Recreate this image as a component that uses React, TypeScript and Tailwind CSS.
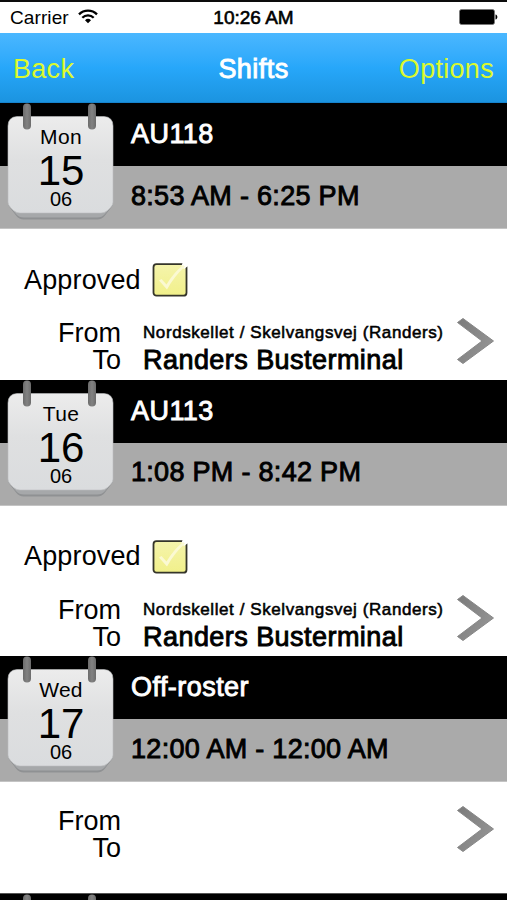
import clsx from 'clsx';

interface Shift {
  id: string;
  weekday: string;
  day: string;
  month: string;
  name: string;
  time: string;
  approved?: boolean;
  from?: string;
  to?: string;
}

const shifts: Shift[] = [
  {
    id: 'mon',
    weekday: 'Mon',
    day: '15',
    month: '06',
    name: 'AU118',
    time: '8:53 AM - 6:25 PM',
    approved: true,
    from: 'Nordskellet / Skelvangsvej (Randers)',
    to: 'Randers Busterminal',
  },
  {
    id: 'tue',
    weekday: 'Tue',
    day: '16',
    month: '06',
    name: 'AU113',
    time: '1:08 PM - 8:42 PM',
    approved: true,
    from: 'Nordskellet / Skelvangsvej (Randers)',
    to: 'Randers Busterminal',
  },
  {
    id: 'wed',
    weekday: 'Wed',
    day: '17',
    month: '06',
    name: 'Off-roster',
    time: '12:00 AM - 12:00 AM',
  },
];

// medium weight: regular outlines thickened a little
const medium = '[-webkit-text-stroke:0.9px_currentColor]';

export default function App() {
  return (
    <div className="flex h-[900px] w-[507px] flex-col overflow-hidden bg-white font-['Liberation_Sans',Arial,sans-serif] text-[27px] leading-[27px] text-black">
      <StatusBar />
      <NavBar />
      <main>
        {shifts.map((s) => (
          <ShiftRow key={s.id} shift={s} />
        ))}
        <div className="relative h-[63px] border-t border-[#555] bg-black">
          <CalendarArt />
        </div>
      </main>
    </div>
  );
}

function StatusBar() {
  return (
    <header className="flex h-[33px] shrink-0 items-center justify-between border-t-2 border-[#0c0c0c] bg-white pr-[9px] pb-px pl-[10px] text-[19px] leading-[19px]">
      <div className="flex w-[110px] items-center gap-[9px]">
        <span className="tracking-[0.1px]">Carrier</span>
        <svg width="20" height="15" viewBox="0 0 20 15" className="mb-[2px] shrink-0" fill="none" stroke="#000" strokeWidth="2.3">
          <path d="M1 5.4 A12.6 12.6 0 0 1 19 5.4" />
          <path d="M4.3 8.8 A8 8 0 0 1 15.7 8.8" />
          <path d="M7 11.2 A4.4 4.4 0 0 1 13 11.2 L10 14.3 Z" fill="#000" stroke="none" />
        </svg>
      </div>
      <span className="-ml-px [-webkit-text-stroke:0.6px_currentColor]">10:26 AM</span>
      <div className="flex w-[110px] justify-end">
        <svg width="39" height="16" viewBox="0 0 39 16">
          <rect x="0.5" y="0.5" width="35" height="15" rx="2" fill="#000" stroke="#777" strokeWidth="0.8" />
          <path d="M36.5 5.5 C39 6 39 10 36.5 10.5 Z" fill="#000" />
        </svg>
      </div>
    </header>
  );
}

function NavBar() {
  return (
    <nav className="flex h-[70px] shrink-0 items-center justify-between border-b border-[#1683cd] bg-linear-to-b from-[#4ab7ff] via-[#27a7fa] to-[#1b94e0] px-[13px] pt-[3px] text-[#dcf92e]">
      <button type="button" className="w-[110px] text-left tracking-[0.3px]">
        Back
      </button>
      <h1 className={clsx('tracking-[0.45px] text-white', medium)}>Shifts</h1>
      <button type="button" className="w-[110px] text-right tracking-[0.3px]">
        Options
      </button>
    </nav>
  );
}

function ShiftRow({ shift }: { shift: Shift }) {
  return (
    <section className={clsx('flex flex-col', shift.approved ? 'h-[276.7px]' : 'h-[237px]')}>
      <div className="relative h-[126px] shrink-0">
        <div className={clsx('flex h-[63px] items-center bg-black pl-[131px] text-white', medium)}>
          <span className="tracking-[0.45px]">{shift.name}</span>
        </div>
        <div className={clsx('flex h-[63px] items-center border-b border-[#c4c4c4] bg-[#aaa] pb-[2px] pl-[131px]', medium)}>
          <span className="tracking-[0.3px]">{shift.time}</span>
        </div>
        <CalendarArt />
        <div className="absolute top-[22px] left-[8px] flex w-[106px] flex-col items-center">
          <span className="text-[21px] leading-[24px] tracking-[0.3px]">{shift.weekday}</span>
          <span className="text-[42px] leading-[43px]">{shift.day}</span>
          <span className="text-[20px] leading-[14px]">{shift.month}</span>
        </div>
      </div>
      <div className={clsx('flex flex-col', shift.approved ? 'pt-[34px]' : 'pt-[26px]')}>
        {shift.approved && (
          <div className="mb-[23px] flex h-[34px] items-center pl-[24px]">
            <span className="w-[128px] tracking-[0.15px]">Approved</span>
            <Checkbox />
          </div>
        )}
        <div className="flex h-[54px] items-start">
          <div className="w-[121px] text-right">
            <p>From</p>
            <p>To</p>
          </div>
          <div className={clsx('w-[335px] pl-[22px] whitespace-nowrap', medium)}>
            <p className="-mt-px h-[28px] text-[17px] tracking-[0.58px] [-webkit-text-stroke:0.55px_currentColor]">{shift.from}</p>
            <p className="tracking-[0.45px]">{shift.to}</p>
          </div>
          <Chevron />
        </div>
      </div>
    </section>
  );
}

function CalendarArt() {
  return (
    <svg width="120" height="126" viewBox="0 0 120 126" className="absolute top-0 left-0">
      <defs>
        <linearGradient id="page" x1="0" y1="0" x2="0" y2="1">
          <stop offset="0" stopColor="#ececec" />
          <stop offset="0.45" stopColor="#dfe0e1" />
          <stop offset="1" stopColor="#dadcde" />
        </linearGradient>
        <linearGradient id="ring" x1="0" y1="0" x2="1" y2="0">
          <stop offset="0" stopColor="#6c6c6c" />
          <stop offset="0.5" stopColor="#828282" />
          <stop offset="1" stopColor="#6c6c6c" />
        </linearGradient>
      </defs>
      <path d="M8 102 L16 112.500 Q19 116.500 24 116.500 H97 Q102 116.500 105 112.500 L113 102 Z" fill="#8f9193" />
      <path d="M8.500 102 L16 111 Q19 114.500 24 114.500 H97 Q102 114.500 105 111 L112.500 102 Z" fill="#a6a8aa" />
      <path
        d="M17 13.500 H104 Q113 14 113 23 V99 Q113 102 110.500 104.500 L107.500 107.500 Q104.500 110 101 110 H20 Q16.500 110 13.500 107.500 L10.500 104.500 Q8 102 8 99 V23 Q8 14 17 13.500 Z"
        fill="url(#page)"
        stroke="#bcbebf"
        strokeWidth="0.6"
      />
      <rect x="23" y="0.500" width="8" height="26" rx="4" fill="url(#ring)" />
      <rect x="88" y="0.500" width="8" height="26" rx="4" fill="url(#ring)" />
    </svg>
  );
}

function Checkbox() {
  return (
    <svg width="36" height="34" viewBox="0 0 36 34">
      <defs>
        <linearGradient id="tick" x1="0" y1="0" x2="0" y2="1">
          <stop offset="0" stopColor="#f5f4ac" />
          <stop offset="1" stopColor="#f1f08a" />
        </linearGradient>
      </defs>
      <rect x="1.500" y="1.200" width="33" height="31.500" rx="3" fill="url(#tick)" stroke="#35352a" strokeWidth="1.800" />
      <path d="M30.500 0 H36 V3 L32 6 L29.500 3 Z" fill="#fff" />
      <path d="M7 17.500 L15 26.500 Q22 13.500 33 3.500 L31 2 Q20.500 11 14.500 21.500 L9.500 16 Z" fill="#fbf9d2" />
    </svg>
  );
}

function Chevron() {
  return (
    <svg width="39" height="48" viewBox="0 0 39 48" className="-mt-[3px] shrink-0">
      <defs>
        <linearGradient id="arrow" x1="0" y1="0" x2="1" y2="0.6">
          <stop offset="0" stopColor="#7a7a7a" />
          <stop offset="1" stopColor="#949494" />
        </linearGradient>
      </defs>
      <path
        d="M1.500 5.500 L7 1.500 L37.500 24 L7 46.500 L1.500 42.500 L26 24 Z"
        fill="url(#arrow)"
        stroke="#888"
        strokeWidth="1"
        strokeLinejoin="round"
      />
    </svg>
  );
}
